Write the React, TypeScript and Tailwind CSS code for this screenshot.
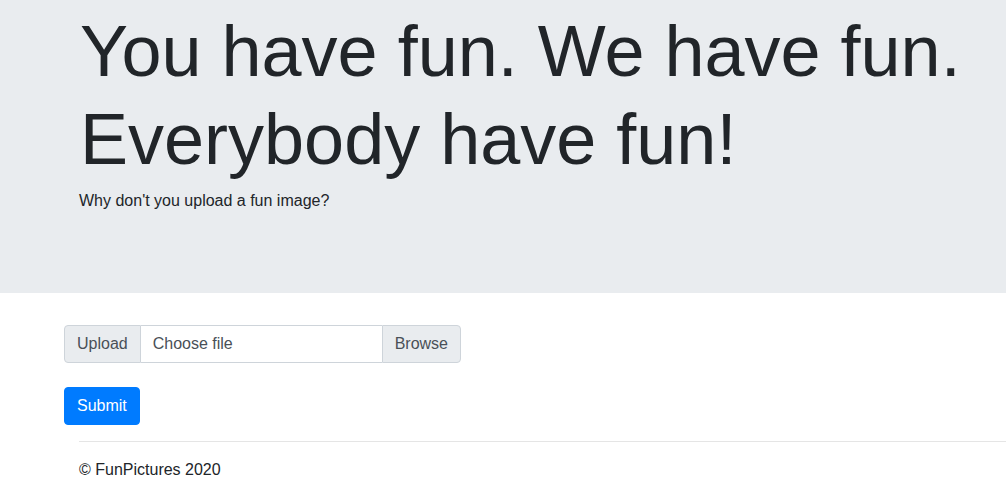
export default function App() {
  return (
    <div className="min-h-[502px] bg-white text-[#212529] font-['Liberation_Sans',Arial,sans-serif] overflow-hidden">
      <div className="bg-[#e9ecef] h-[293px] pl-[80px] pt-[7px]">
        <h1 className="text-[72px] leading-[88px] font-normal">
          You have fun. We have fun.
          <br />
          Everybody have fun!
        </h1>
        <p className="mt-[6px] -ml-px text-base leading-6">Why don't you upload a fun image?</p>
      </div>

      <div className="pl-[64px] pt-[32px]">
        <div className="flex h-[38px] w-[397px] text-base text-[#495057]">
          <span className="flex items-center px-3 bg-[#e9ecef] border border-[#ced4da] rounded-l">
            Upload
          </span>
          <label className="flex items-center w-[242px] px-3 bg-white border-y border-[#ced4da]">
            Choose file
          </label>
          <span className="flex items-center px-3 bg-[#e9ecef] border border-[#ced4da] rounded-r">
            Browse
          </span>
        </div>
        <button className="mt-[24px] h-[38px] px-3 bg-[#007bff] border border-[#007bff] text-white text-base rounded">
          Submit
        </button>
      </div>

      <footer className="pl-[79px] mt-[16px]">
        <hr className="border-0 border-t border-[#e5e5e5]" />
        <p className="mt-[16px] text-base leading-6">© FunPictures 2020</p>
      </footer>
    </div>
  );
}
